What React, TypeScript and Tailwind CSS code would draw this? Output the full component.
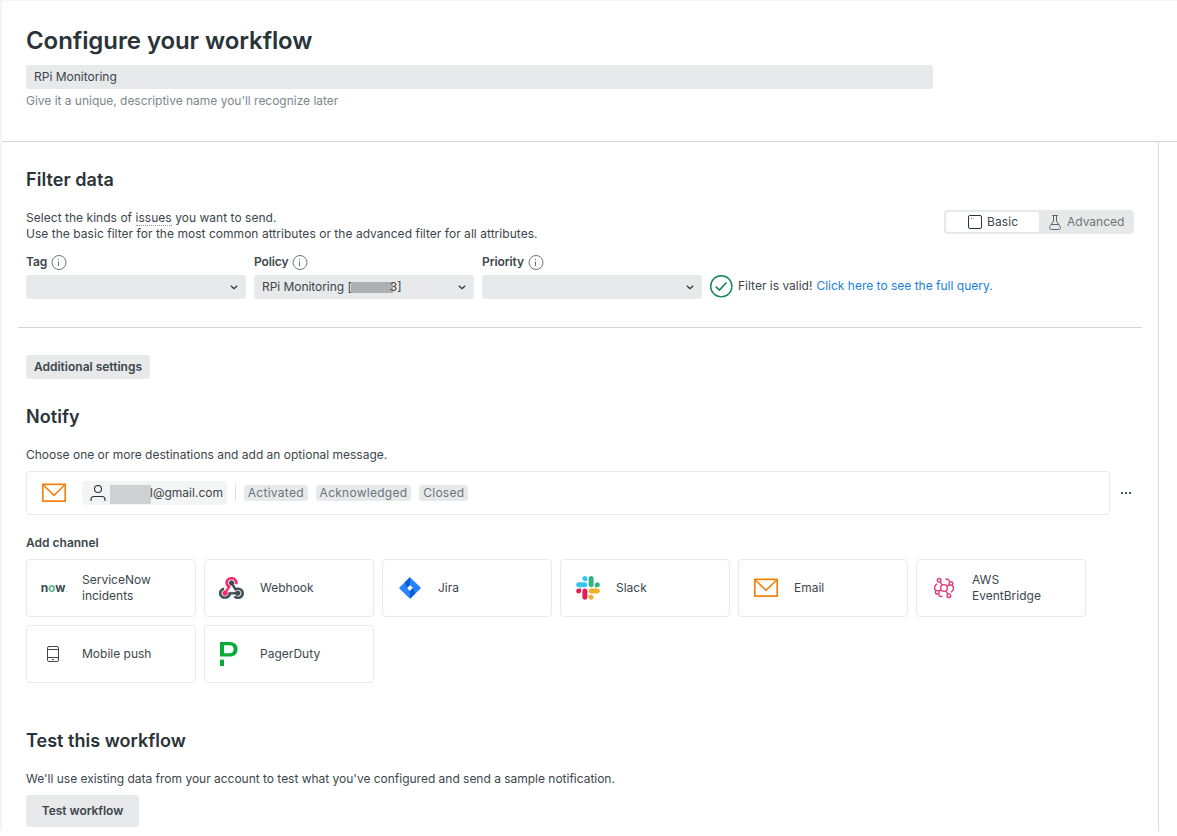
import type { ReactNode } from "react";

function InfoIcon() {
  return (
    <svg width="16" height="16" viewBox="0 0 16 16" fill="none" stroke="#6b7579" className="ml-1 shrink-0">
      <circle cx="8" cy="8.5" r="7" />
      <path d="M7.5 7.5v4.5M7.5 5v1" />
    </svg>
  );
}

function Chevron() {
  return (
    <svg width="8" height="5" viewBox="0 0 8 5" fill="none" stroke="#293338" strokeWidth="1.2" className="shrink-0">
      <path d="M0.8 0.7L4 3.7L7.2 0.7" />
    </svg>
  );
}

function MailIcon() {
  return (
    <svg width="26" height="20" viewBox="0 0 26 20" fill="none" stroke="#f5820f">
      <path d="M1.8 1.3h22.4v16.9H1.8z" strokeWidth="1.7" />
      <path d="M1.8 1.5L13 12.3L24.2 1.5" strokeWidth="1.6" />
    </svg>
  );
}

function WebhookIcon() {
  return (
    <svg width="25" height="22" viewBox="0 0 256 239" preserveAspectRatio="none" strokeWidth="4" className="mb-px">
      <path fill="#f5276c" stroke="#f5276c" d="M119.54 100.503c-10.61 17.836-20.775 35.108-31.152 52.25-2.665 4.401-3.984 7.986-1.855 13.58 5.878 15.454-2.414 30.493-17.998 34.575-14.697 3.851-29.016-5.808-31.932-21.543-2.584-13.927 8.224-27.58 23.58-29.757 1.286-.184 2.6-.205 4.762-.367l23.358-39.168C73.612 95.465 64.868 78.39 66.803 57.23c1.368-14.957 7.25-27.883 18-38.477 20.59-20.288 52.002-23.573 76.246-8.001 23.284 14.958 33.948 44.094 24.858 69.031-6.854-1.858-13.756-3.732-21.343-5.79 2.854-13.865.743-26.315-8.608-36.981-6.178-7.042-14.106-10.733-23.12-12.093-18.072-2.73-35.815 8.88-41.08 26.618-5.976 20.13 3.069 36.575 27.784 48.967z" />
      <path fill="#3d4b55" stroke="#3d4b55" d="M149.841 79.41c7.475 13.187 15.065 26.573 22.587 39.836 38.02-11.763 66.686 9.284 76.97 31.817 12.422 27.219 3.93 59.457-20.465 76.25-25.04 17.238-56.707 14.293-78.892-7.851 5.654-4.733 11.336-9.487 17.407-14.566 21.912 14.192 41.077 13.524 55.305-3.282 12.133-14.337 11.87-35.714-.615-49.75-14.408-16.197-33.707-16.691-57.035-1.143-9.677-17.168-19.522-34.199-28.893-51.491-3.16-5.828-6.648-9.21-13.77-10.443-11.893-2.062-19.571-12.275-20.032-23.717-.453-11.316 6.214-21.545 16.634-25.53 10.322-3.949 22.435-.762 29.378 8.014 5.674 7.17 7.477 15.24 4.491 24.083-.83 2.466-1.905 4.852-3.07 7.774z" />
      <path fill="#3d4b55" stroke="#3d4b55" d="M167.707 187.21h-45.77c-4.387 18.044-13.863 32.612-30.19 41.876-12.693 7.2-26.373 9.641-40.933 7.29-26.808-4.323-48.728-28.456-50.658-55.63-2.184-30.784 18.975-58.147 47.178-64.293 1.947 7.071 3.915 14.21 5.862 21.264-25.876 13.202-34.832 29.836-27.59 50.636 6.375 18.304 24.484 28.337 44.147 24.457 20.08-3.962 30.204-20.65 28.968-47.432 19.036 0 38.088-.197 57.126.097 7.434.117 13.173-.654 18.773-7.208 9.22-10.784 26.191-9.811 36.121.374 10.148 10.409 9.662 27.157-1.077 37.127-10.361 9.62-26.73 9.106-36.424-1.26-1.992-2.136-3.562-4.673-5.533-7.298z" />
    </svg>
  );
}

function JiraIcon() {
  return (
    <svg width="22" height="22" viewBox="0 0 22 22">
      <path fill="#2684ff" fillRule="evenodd" d="M11 0.3L21.4 10.2Q22 11 21.4 11.8L11 21.7L0.6 11.8Q0 11 0.6 10.2ZM11 8L8 11L11 14L14 11Z" />
      <path fill="#0f5bd0" d="M11 0.3V8L8 11L5.6 5.5Z" />
      <path fill="#0f5bd0" d="M11 21.7V14L14 11L16.4 16.5Z" />
    </svg>
  );
}

function SlackIcon() {
  return (
    <svg width="24" height="24" viewBox="0 0 127 127">
      <path fill="#e01e5a" d="M27.2 80c0 7.3-5.9 13.2-13.2 13.2C6.7 93.2.8 87.3.8 80c0-7.3 5.9-13.2 13.2-13.2h13.2V80zm6.6 0c0-7.3 5.9-13.2 13.2-13.2 7.3 0 13.2 5.9 13.2 13.2v33c0 7.3-5.9 13.2-13.2 13.2-7.3 0-13.2-5.9-13.2-13.2V80z" />
      <path fill="#36c5f0" d="M47 27c-7.3 0-13.2-5.9-13.2-13.2C33.8 6.5 39.7.6 47 .6c7.3 0 13.2 5.9 13.2 13.2V27H47zm0 6.7c7.3 0 13.2 5.9 13.2 13.2 0 7.3-5.9 13.2-13.2 13.2H13.9C6.6 60.1.7 54.2.7 46.9c0-7.3 5.9-13.2 13.2-13.2H47z" />
      <path fill="#2eb67d" d="M99.9 46.9c0-7.3 5.9-13.2 13.2-13.2 7.3 0 13.2 5.9 13.2 13.2 0 7.3-5.9 13.2-13.2 13.2H99.9V46.9zm-6.6 0c0 7.3-5.9 13.2-13.2 13.2-7.3 0-13.2-5.9-13.2-13.2V13.8C66.9 6.5 72.8.6 80.1.6c7.3 0 13.2 5.9 13.2 13.2v33.1z" />
      <path fill="#ecb22e" d="M80.1 99.8c7.3 0 13.2 5.9 13.2 13.2 0 7.3-5.9 13.2-13.2 13.2-7.3 0-13.2-5.9-13.2-13.2V99.8h13.2zm0-6.6c-7.3 0-13.2-5.9-13.2-13.2 0-7.3 5.9-13.2 13.2-13.2h33.1c7.3 0 13.2 5.9 13.2 13.2 0 7.3-5.9 13.2-13.2 13.2H80.1z" />
    </svg>
  );
}

function EventBridgeIcon() {
  return (
    <svg width="22" height="22" viewBox="0 0 22 22" fill="none" stroke="#dd3a78" strokeWidth="1.4">
      <circle cx="11" cy="11" r="3.4" />
      <circle cx="6.1" cy="3.3" r="1.8" />
      <circle cx="17.9" cy="6.5" r="1.8" />
      <circle cx="4.3" cy="15.2" r="1.8" />
      <circle cx="15.9" cy="18.7" r="1.8" />
      <path d="M7.1 4.9L9.2 8.1M16.3 7.5L14 9.2M5.9 14.2L8 12.8M14.9 17.1L12.8 13.9" />
      <path d="M12.5 2.2H15L16.8 4.4M4 6.7L2 8.8L1.5 12L2.8 13.6M5.2 17.2L6.9 19.4H9.6M18.9 8.3L20.4 10V12.5L18.2 15.4" />
    </svg>
  );
}

function PhoneIcon() {
  return (
    <svg width="12" height="16" viewBox="0 0 12 16" fill="none" stroke="#3f494e">
      <rect x="0.5" y="0.5" width="11" height="15" rx="1.5" />
      <path d="M0.5 3.5h11M0.5 11.5h11M5 13.5h2" />
    </svg>
  );
}

function PagerDutyIcon() {
  return (
    <svg width="18" height="24" viewBox="0 0 18 24">
      <path fill="#06ac38" fillRule="evenodd" d="M0 0H9.5C14.8 0 17.6 2.9 17.6 7.2C17.6 11.6 14.6 14.6 9.6 14.6H0ZM4 3.3V11.3H9.5C12.2 11.3 13.6 9.8 13.6 7.3C13.6 4.7 12.2 3.3 9.5 3.3Z" />
      <rect y="17.7" width="4" height="6.3" fill="#06ac38" />
    </svg>
  );
}

function Field({ label, value }: { label: string; value?: ReactNode }) {
  return (
    <div className="w-[220px] shrink-0">
      <div className="flex h-[21px] items-start">
        <span className="font-semibold leading-4 tracking-[-0.1px]">{label}</span>
        <InfoIcon />
      </div>
      <div className="flex h-6 items-center justify-between rounded-[3px] bg-[#e7e9ea] px-2">
        <div className="flex items-center whitespace-nowrap">{value}</div>
        <Chevron />
      </div>
    </div>
  );
}

const channels: { name: ReactNode; icon: ReactNode }[] = [
  {
    name: <>ServiceNow<br />incidents</>,
    icon: (
      <span className="flex items-baseline pl-px text-[12px] font-bold leading-none tracking-[-0.1px] text-[#3b4a4e]">
        n<span className="text-[#62b58f]">o</span>w<span className="text-[7px] font-normal text-[#62b58f]">.</span>
      </span>
    ),
  },
  { name: "Webhook", icon: <WebhookIcon /> },
  { name: "Jira", icon: <JiraIcon /> },
  { name: "Slack", icon: <SlackIcon /> },
  { name: "Email", icon: <MailIcon /> },
  { name: <>AWS<br />EventBridge</>, icon: <EventBridgeIcon /> },
  { name: "Mobile push", icon: <div className="pr-px"><PhoneIcon /></div> },
  { name: "PagerDuty", icon: <div className="pr-[6px]"><PagerDutyIcon /></div> },
];

const tags = ["Activated", "Acknowledged", "Closed"];

export default function App() {
  return (
    <div className="h-[836px] w-[1177px] overflow-hidden bg-white font-['Inter',sans-serif] text-[12px] leading-4 text-[#3c464b]">
      <div className="h-[831px] bg-[#f3f4f4] pl-[2px] pt-px">
        <div className="flex h-[830px] flex-col rounded-tl-[4px] bg-white">
          <header className="h-[141px] border-b border-[#d0d3d4] pl-6 pt-6">
            <h1 className="h-10 text-[24px] font-semibold leading-8 tracking-[-0.08px] text-[#293338]">Configure your workflow</h1>
            <div className="flex h-6 w-[907px] items-center rounded-[3px] bg-[#e7e9ea] px-2">RPi Monitoring</div>
            <p className="mt-1 tracking-[-0.02px] text-[#7d878b]">Give it a unique, descriptive name you'll recognize later</p>
          </header>

          <main className="h-[689px] w-[1157px] border-r border-[#d9dddf] pl-6 pt-[26px]">
            <h2 className="h-[42px] text-[18px] font-semibold leading-6 tracking-[0.06px] text-[#293338]">Filter data</h2>
            <div className="flex h-11 w-[1108px] items-start justify-between">
              <p className="tracking-[0.035px]">
                Select the kinds of <span className="inline-block h-4 border-b border-dotted border-[#8a9498]">issues</span> you want to send.
                <br />
                Use the basic filter for the most common attributes or the advanced filter for all attributes.
              </p>
              <div className="flex h-6 w-[190px] rounded-[4px] bg-[#e7e9e9] p-[2px]">
                <div className="flex w-[93px] items-center rounded-[3px] bg-white pl-[22px]">
                  <svg width="14" height="14" viewBox="0 0 14 14" fill="none" stroke="#293338">
                    <rect x="0.5" y="0.5" width="13" height="13" rx="1.5" />
                    <path d="M3 3.5h1M5 3.5h.6" strokeWidth="0.7" />
                  </svg>
                  <span className="ml-[5px] tracking-[0.1px]">Basic</span>
                </div>
                <div className="flex items-center pl-[10px] text-[#6b7579]">
                  <svg width="12" height="15" viewBox="0 0 12 15" fill="none" stroke="#59666b">
                    <path d="M3.2 0.5h5.6M4.5 0.5V6L0.8 11.7C.1 13 .7 14.5 2.2 14.5H9.8C11.3 14.5 11.9 13 11.2 11.7L7.5 6V.5M2.2 9.5h7.6" />
                  </svg>
                  <span className="ml-[6px]">Advanced</span>
                </div>
              </div>
            </div>

            <div className="flex h-[73px] gap-2">
              <Field label="Tag" />
              <Field
                label="Policy"
                value={
                  <>
                    <span className="tracking-[-0.05px]">RPi Monitoring [</span>
                    <span className="-ml-px h-[11px] w-[42px] bg-[#abb0b2]" />
                    <span className="-ml-[3px]">3]</span>
                  </>
                }
              />
              <Field label="Priority" />
              <div className="mt-5 flex h-6 items-center">
                <svg width="24" height="24" viewBox="0 0 24 24" fill="none" stroke="#11845b" strokeWidth="1.4" className="-ml-px -mt-px shrink-0">
                  <circle cx="12.3" cy="12.3" r="10.6" />
                  <path d="M6.8 12.7L10.4 16.1L17.5 8.5" strokeWidth="1.6" />
                </svg>
                <span className="ml-[5px]">Filter is valid!</span>
                <a className="ml-1 text-[#1a80e2]">Click here to see the full query.</a>
              </div>
            </div>
            <div className="-ml-2 h-px w-[1124px] bg-[#d0d3d4]" />

            <button className="mt-[27px] block h-6 w-[124px] rounded-[3px] bg-[#e7e9ea] text-center font-semibold">Additional settings</button>
            <h2 className="mt-[26px] h-[42px] text-[18px] font-semibold leading-6 tracking-[0.06px] text-[#293338]">Notify</h2>
            <p>Choose one or more destinations and add an optional message.</p>

            <div className="mt-2 flex h-11 items-center">
              <div className="flex h-11 w-[1084px] items-center rounded-[4px] border border-[#e7e9ea] pl-[14px]">
                <MailIcon />
                <div className="ml-[15px] flex h-6 w-[145px] items-center rounded-[4px] bg-[#f3f4f4] pl-2">
                  <svg width="16" height="16" viewBox="0 0 16 16" fill="none" stroke="#293338" strokeWidth="1.1">
                    <circle cx="8" cy="4" r="3.5" />
                    <path d="M1 16V14.5Q1 11.5 4 11.5H12Q15 11.5 15 14.5V16" />
                  </svg>
                  <span className="ml-1 mt-[2px] h-[19px] w-[41px] bg-[#cfd0d1]" />
                  <span className="-ml-px">l@gmail.com</span>
                </div>
                <div className="ml-2 mr-2 h-4 w-px bg-[#d9dddf]" />
                <div className="flex gap-2">
                  {tags.map((t) => (
                    <span key={t} className="h-4 rounded-[3px] bg-[#e7e9ea] pl-[3.8px] pr-1 tracking-[0.27px] text-[#6b7579]">{t}</span>
                  ))}
                </div>
              </div>
              <svg width="11" height="2" viewBox="0 0 11 2" fill="#4a5459" className="ml-[11px]">
                <path d="M0 0h2v2H0zM4 0h2v2H4zM8 0h2v2H8z" />
              </svg>
            </div>

            <h3 className="mt-5 font-semibold">Add channel</h3>
            <div className="mt-2 grid w-[1060px] grid-cols-6 gap-2">
              {channels.map((c, i) => (
                <div key={i} className="flex h-[58px] items-center rounded-[4px] border border-[#e7e9ea]">
                  <div className="ml-[13px] flex w-[27px] shrink-0 justify-center">{c.icon}</div>
                  <div className="ml-[15px]">{c.name}</div>
                </div>
              ))}
            </div>

            <h2 className="mt-[46px] h-[42px] text-[18px] font-semibold leading-6 tracking-[0.03px] text-[#293338]">Test this workflow</h2>
            <p className="tracking-[-0.015px]">We'll use existing data from your account to test what you've configured and send a sample notification.</p>
            <button className="mt-2 block h-8 w-[113px] rounded-[3px] bg-[#e7e9ea] text-center font-semibold tracking-[-0.04px]">Test workflow</button>
          </main>
        </div>
      </div>
    </div>
  );
}
